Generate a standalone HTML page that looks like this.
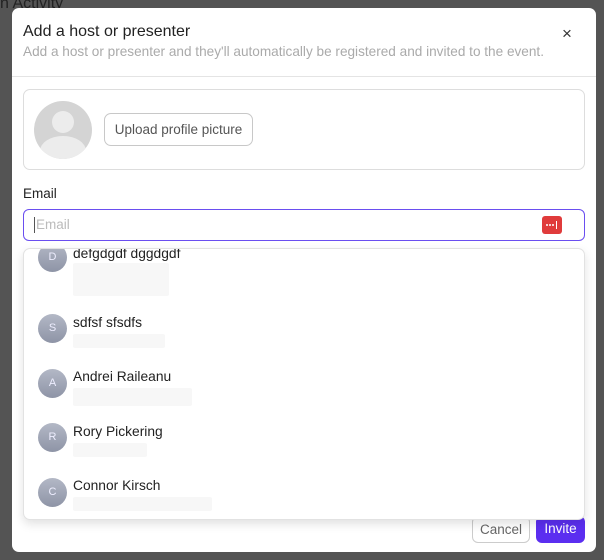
<!DOCTYPE html>
<html><head><style>
*{box-sizing:border-box;margin:0;padding:0}
body{width:604px;height:560px;background:#545454;font-family:"Liberation Sans",sans-serif;position:relative;overflow:hidden}
.a{position:absolute}
.modal{left:12px;top:8px;width:584px;height:544px;background:#fff;border-radius:7px}
.t{left:23px;top:23px;font-size:16px;color:#222}
.s{left:23px;top:44px;font-size:13.6px;color:#aaa}
.hr{left:12px;top:76px;width:584px;height:1px;background:#e4e4e4}
.card{left:23px;top:89px;width:562px;height:81px;border:1px solid #ddd;border-radius:7px}
.av{left:34px;top:101px;width:58px;height:58px;border-radius:50%;background:#d4d4d4;overflow:hidden}
.up{left:104px;top:113px;width:149px;height:33px;border:1px solid #c8c8c8;border-radius:7px;font-size:13.5px;color:#555;text-align:center;line-height:31px}
.lab{left:23px;top:186px;font-size:13.5px;color:#222}
.inp{left:23px;top:209px;width:562px;height:32px;border:1px solid #6a4ef0;border-radius:6px}
.ph{left:34px;top:217px;font-size:13.5px;color:#bbb;border-left:1px solid #555;padding-left:1px;line-height:16px}
.lp{left:542px;top:216px;width:20px;height:18px;background:#e03b3b;border-radius:3px}
.dot{position:absolute;top:8px;width:2px;height:2px;border-radius:50%;background:#fff}
.dd{left:23px;top:248px;width:562px;height:272px;border:1px solid #e2e2e2;border-radius:7px;background:#fff;box-shadow:0 4px 10px rgba(0,0,0,.12);overflow:hidden}
.c{position:absolute;left:14px;width:29px;height:29px;border-radius:50%;background:linear-gradient(#b3b8c6,#8e94a6);color:#eef;font-size:11px;text-align:center;line-height:29px}
.n{position:absolute;left:49px;font-size:13.8px;color:#222}
.b{position:absolute;left:49px;height:14px;background:#f7f7f7;border-radius:2px}
.btn{top:516px;height:27px;border-radius:6px;font-size:13.5px;line-height:26px;text-align:center}
</style></head><body>
<div class="a" style="left:0;top:-5px;font-size:16px;color:#222">n Activity</div>
<div class="a modal"></div>
<div class="a t">Add a host or presenter</div>
<div class="a s">Add a host or presenter and they'll automatically be registered and invited to the event.</div>
<div class="a" style="left:562px;top:24px;font-size:17px;color:#333">×</div>
<div class="a hr"></div>
<div class="a card"></div>
<div class="a av"><div class="a" style="left:18px;top:10px;width:22px;height:22px;border-radius:50%;background:#ececec"></div><div class="a" style="left:6px;top:35px;width:46px;height:30px;border-radius:50%;background:#ececec"></div></div>
<div class="a up">Upload profile picture</div>
<div class="a lab">Email</div>
<div class="a inp"></div>
<div class="a ph">Email</div>
<div class="a lp"><div class="dot" style="left:4px"></div><div class="dot" style="left:7px"></div><div class="dot" style="left:10px"></div><div class="a" style="left:14px;top:5px;width:1px;height:8px;background:#fff"></div></div>
<div class="a btn" style="left:472px;width:58px;border:1px solid #ccc;color:#666;background:#fff">Cancel</div>
<div class="a btn" style="left:536px;width:49px;background:#5b2ef0;color:#fff">Invite</div>
<div class="a dd">
<div class="c" style="top:-6px">D</div><div class="n" style="top:-3px">defgdgdf dggdgdf</div><div class="b" style="top:14px;width:96px;height:33px"></div>
<div class="c" style="top:65px">S</div><div class="n" style="top:66px">sdfsf sfsdfs</div><div class="b" style="top:85px;width:92px"></div>
<div class="c" style="top:120px">A</div><div class="n" style="top:120px">Andrei Raileanu</div><div class="b" style="top:139px;width:119px;height:18px"></div>
<div class="c" style="top:174px">R</div><div class="n" style="top:175px">Rory Pickering</div><div class="b" style="top:194px;width:74px"></div>
<div class="c" style="top:229px">C</div><div class="n" style="top:229px">Connor Kirsch</div><div class="b" style="top:248px;width:139px"></div>
</div>
</body></html>
